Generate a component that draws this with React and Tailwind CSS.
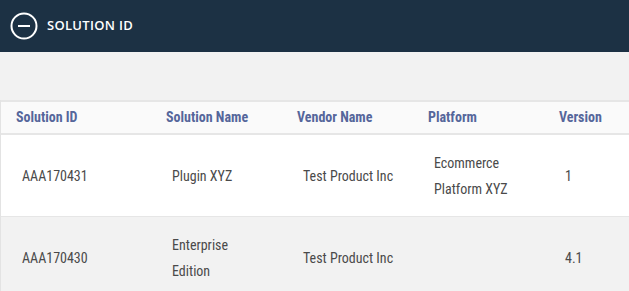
const rows = [
  { id: "AAA170431", name: ["Plugin XYZ"], vendor: "Test Product Inc", platform: ["Ecommerce", "Platform XYZ"], version: "1" },
  { id: "AAA170430", name: ["Enterprise", "Edition"], vendor: "Test Product Inc", platform: [], version: "4.1" },
];

const cols = ["w-[149px]", "w-[131px]", "w-[131px]", "w-[131px]", "flex-1"];
const headPad = ["pl-[15px]", "pl-[16px]", "pl-[16px]", "pl-[16px]", "pl-[16px]"];
const cellPad = ["pl-[21px]", "pl-[22px]", "pl-[22px]", "pl-[22px]", "pl-[22px]"];

const Lines = ({ items }) => (
  <div className="flex flex-col">
    {items.map((t) => (
      <span key={t}>{t}</span>
    ))}
  </div>
);

export default function App() {
  return (
    <div className="w-[629px] h-[291px] overflow-hidden bg-[#f2f2f2]">
      <div className="h-[52px] bg-[#1c3144] flex items-center pl-[10px] gap-[9px]">
        <svg width="28" height="28" viewBox="0 0 28 28" fill="none" stroke="white" strokeWidth="2">
          <circle cx="14" cy="14" r="12.5" />
          <line x1="8" y1="14" x2="20" y2="14" />
        </svg>
        <span className="text-white text-[13px] font-semibold tracking-[0.3px] font-['Open_Sans',sans-serif]">
          SOLUTION ID
        </span>
      </div>
      <div className="h-[48px]" />
      <div className="border-l border-[#e3e3e3] font-['Roboto_Condensed','Liberation_Sans_Narrow','DejaVu_Sans_Condensed',sans-serif]">
        <div className="flex h-[35px] items-center bg-[#fafafa] border-y-2 border-[#e6e6e6] text-[#55669b] font-bold text-[14px]">
          {["Solution ID", "Solution Name", "Vendor Name", "Platform", "Version"].map((h, i) => (
            <div key={h} className={`${cols[i]} ${headPad[i]}`}>{h}</div>
          ))}
        </div>
        {rows.map((r, idx) => (
          <div
            key={r.id}
            className={`flex items-center h-[82px] text-[14px] leading-[26px] text-[#4a4a4a] border-b border-[#e6e6e6] ${idx % 2 ? "bg-[#f2f2f2]" : "bg-white"}`}
          >
            <div className={`${cols[0]} ${cellPad[0]}`}>{r.id}</div>
            <div className={`${cols[1]} ${cellPad[1]}`}><Lines items={r.name} /></div>
            <div className={`${cols[2]} ${cellPad[2]}`}>{r.vendor}</div>
            <div className={`${cols[3]} ${cellPad[3]}`}><Lines items={r.platform} /></div>
            <div className={`${cols[4]} ${cellPad[4]}`}>{r.version}</div>
          </div>
        ))}
      </div>
    </div>
  );
}
